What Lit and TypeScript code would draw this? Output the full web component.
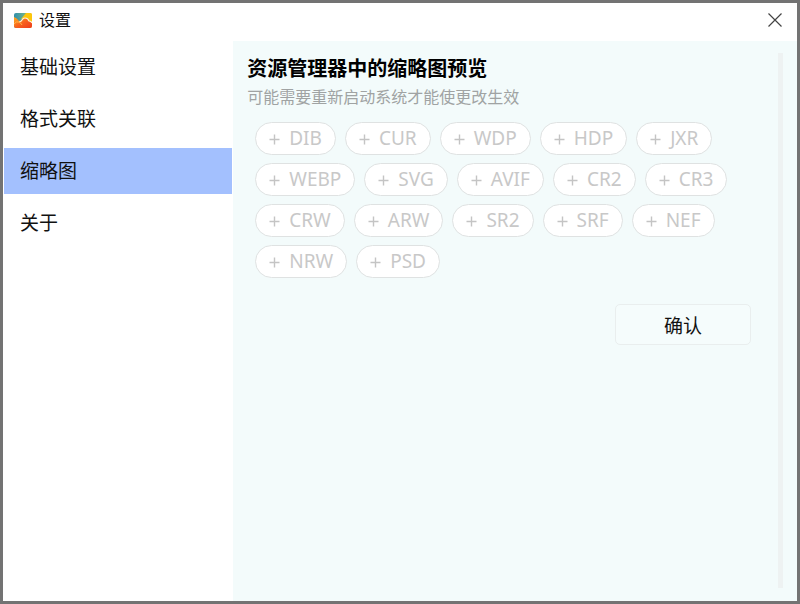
import { LitElement, html, css, svg } from "lit";
import { customElement, property, state } from "lit/decorators.js";
import { classMap } from "lit/directives/class-map.js";

const SECTIONS = ["基础设置", "格式关联", "缩略图", "关于"];

const FORMATS = [
  "DIB", "CUR", "WDP", "HDP", "JXR",
  "WEBP", "SVG", "AVIF", "CR2", "CR3",
  "CRW", "ARW", "SR2", "SRF", "NEF",
  "NRW", "PSD",
];

const logo = svg`
  <defs>
    <linearGradient id="sky" x1="0" y1="0" x2="1" y2="0">
      <stop offset="0" stop-color="#2f8fae"></stop>
      <stop offset="0.6" stop-color="#6fb08c"></stop>
      <stop offset="1" stop-color="#f6c01c"></stop>
    </linearGradient>
    <linearGradient id="hill" x1="0" y1="0" x2="1" y2="1">
      <stop offset="0" stop-color="#ffb020"></stop>
      <stop offset="0.5" stop-color="#f8621e"></stop>
      <stop offset="1" stop-color="#ee3a1c"></stop>
    </linearGradient>
  </defs>
  <rect x="0" y="0" width="18" height="15" rx="2" fill="url(#sky)"></rect>
  <path d="M12 0H16Q18 0 18 2V10L12 5L7 6Z" fill="#fcc60c"></path>
  <path d="M0 4Q3 5 5 8Q7 8 8 7Q9 5 11 5Q14 5 15 8Q17 8 18 10V13Q18 15 16 15H2Q0 15 0 13Z" fill="url(#hill)"></path>
  <path d="M5 9Q7 9 8 7Q9 5 11 5Q14 5 15 8Q17 8 18 10" fill="none" stroke="#fff2d8" stroke-width="1.2"></path>
  <path d="M0 11Q2 8 5 9Q7 10 8 12" fill="none" stroke="#ffb347" stroke-width="1"></path>`;

@customElement("format-chip")
export class FormatChip extends LitElement {
  @property() label = "";
  @state() private picked = false;

  static styles = css`
    :host {
      display: block;
    }
    .chip {
      display: flex;
      align-items: center;
      gap: 9px;
      height: 33px;
      padding: 0 13px;
      box-sizing: border-box;
      border: 1px solid #dfe2e2;
      border-radius: 17px;
      background: #fff;
      color: #c8c8c8;
      font: 19px/31px "Noto Sans", "Noto Sans CJK SC", sans-serif;
      cursor: pointer;
    }
    .plus {
      display: block;
      width: 11px;
      height: 11px;
      margin-top: 2px;
    }
  `;

  render() {
    return html`<button
      class="chip"
      type="button"
      aria-pressed=${this.picked}
      @click=${() => (this.picked = !this.picked)}
    >
      <svg class="plus" viewBox="0 0 11 11" aria-hidden="true">
        <path d="M5.5 0.5V10.5M0.5 5.5H10.5" stroke="#c4c4c4" stroke-width="1.4"></path>
      </svg>
      ${this.label}
    </button>`;
  }
}

@customElement("app-root")
export class AppRoot extends LitElement {
  @state() private current = 2;

  static styles = css`
    :host {
      display: flex;
      flex-direction: column;
      min-height: 100vh;
      box-sizing: border-box;
      border: 3px solid #737373;
      background: #fff;
      color: #111;
      font-family: "Noto Sans CJK SC", sans-serif;
    }
    .titlebar {
      display: flex;
      align-items: center;
      height: 38px;
      padding: 0 14px 4px 11px;
      box-sizing: border-box;
    }
    .logo {
      width: 18px;
      height: 15px;
      margin-right: 7px;
    }
    .name {
      flex: 1;
      margin: 0;
      padding-bottom: 2px;
      font-size: 16px;
      font-weight: 400;
      line-height: 24px;
    }
    .close {
      display: flex;
      padding: 0;
      border: 0;
      background: none;
      cursor: pointer;
    }
    .body {
      display: flex;
      flex: 1;
    }
    .nav {
      display: flex;
      flex-direction: column;
      gap: 6px;
      width: 29%;
      box-sizing: border-box;
      padding: 3px 1px 0;
    }
    .item {
      height: 46px;
      padding: 0 16px 2px;
      border: 0;
      background: none;
      color: inherit;
      font: inherit;
      font-size: 19px;
      line-height: 28px;
      text-align: left;
      cursor: pointer;
    }
    .item.on {
      background: #a3c0fe;
    }
    .panel {
      display: flex;
      flex: 1;
      gap: 27px;
      padding: 12px 14px 13px;
      background: #f3fbfb;
    }
    .content {
      flex: 1;
    }
    .track {
      width: 5px;
      background: #eef2f2;
    }
    .heading {
      margin: 0;
      color: #000;
      font-size: 20px;
      font-weight: 700;
      line-height: 30px;
    }
    .note {
      margin: 0;
      color: #a0a3a3;
      font-size: 16px;
      line-height: 27px;
    }
    .chips {
      display: flex;
      flex-wrap: wrap;
      gap: 8px 9px;
      margin-top: 12px;
      padding-left: 8px;
    }
    .actions {
      display: flex;
      justify-content: flex-end;
      margin-top: 26px;
    }
    .confirm {
      width: 136px;
      height: 41px;
      padding: 0;
      border: 1px solid #e9eeee;
      border-radius: 5px;
      background: #f5fcfc;
      color: inherit;
      font: inherit;
      font-size: 19px;
      cursor: pointer;
    }
  `;

  render() {
    return html`
      <header class="titlebar">
        <svg class="logo" viewBox="0 0 18 15" aria-hidden="true">${logo}</svg>
        <h1 class="name">设置</h1>
        <button class="close" type="button" aria-label="关闭">
          <svg width="16" height="16" viewBox="0 0 16 16">
            <path d="M1.5 1.5L14.5 14.5M14.5 1.5L1.5 14.5" stroke="#444" stroke-width="1.2"></path>
          </svg>
        </button>
      </header>
      <div class="body">
        <nav class="nav">
          ${SECTIONS.map(
            (name, i) => html`<button
              type="button"
              class=${classMap({ item: true, on: i === this.current })}
              @click=${() => (this.current = i)}
            >${name}</button>`
          )}
        </nav>
        <main class="panel">
          <section class="content">
            <h2 class="heading">资源管理器中的缩略图预览</h2>
            <p class="note">可能需要重新启动系统才能使更改生效</p>
            <div class="chips">
              ${FORMATS.map((f) => html`<format-chip label=${f}></format-chip>`)}
            </div>
            <div class="actions">
              <button class="confirm" type="button">确认</button>
            </div>
          </section>
          <div class="track"></div>
        </main>
      </div>
    `;
  }
}
